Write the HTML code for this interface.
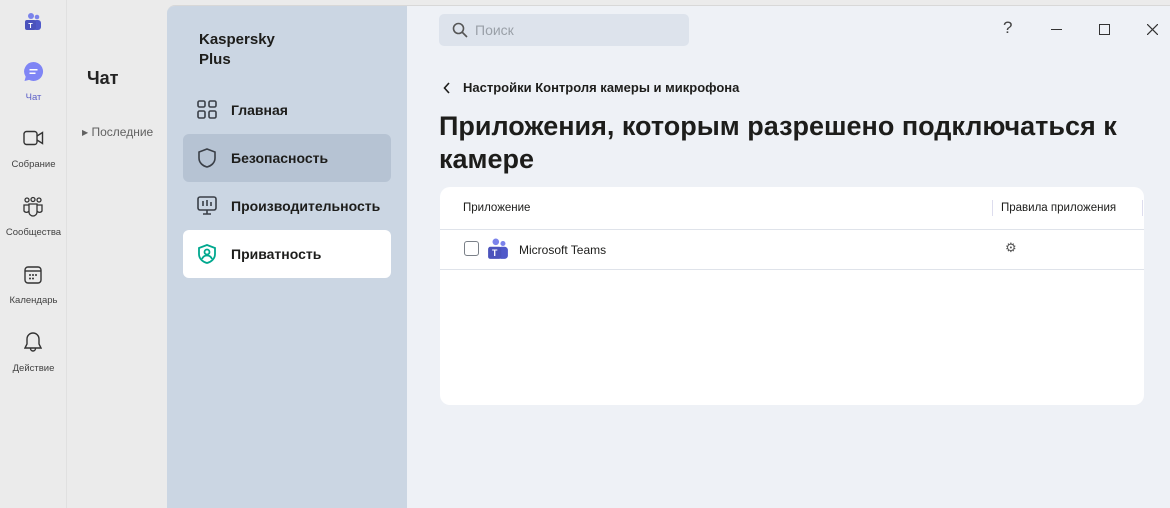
<!DOCTYPE html>
<html><head><meta charset="utf-8"><style>
*{box-sizing:border-box;margin:0;padding:0}
body{width:1170px;height:508px;overflow:hidden;background:#ebebeb;font-family:"Liberation Sans","DejaVu Sans",sans-serif;position:relative}
.abs{position:absolute}
.rail{left:0;top:0;width:67px;height:508px;background:#ebebeb;border-right:1px solid #e0e0e0}
.ri{position:absolute;left:0;width:67px;text-align:center;font-size:9.5px;color:#424242}
.chat{left:67px;top:0;width:110px;height:508px;background:#ebebeb}
.kw{left:167px;top:5px;width:1003px;height:503px;background:#eef1f6;border-top-left-radius:8px;overflow:hidden;border-top:1px solid #d8d8d8}
.side{left:0;top:0;width:240px;height:503px;background:#cbd6e3}
.nav{position:absolute;left:16px;width:208px;height:48px;border-radius:6px;font-size:14px;font-weight:bold;color:#1d1d1b;line-height:48px;padding-left:48px}
.nav svg{position:absolute;left:14px;top:14px}
</style></head><body>
<div class="abs rail">
  <svg class="abs" style="left:23px;top:12px" width="20" height="20" viewBox="0 0 20 20"><circle cx="8" cy="4" r="3" fill="#7b83eb"/><circle cx="14" cy="5" r="2.3" fill="#7b83eb"/><rect x="10" y="8" width="8" height="10" rx="3" fill="#5059c9"/><rect x="2" y="8" width="11" height="10" rx="2" fill="#4b53bc"/><text x="7.5" y="16" font-size="7" fill="#fff" text-anchor="middle" font-weight="bold" font-family="Liberation Sans">T</text></svg>
  <svg class="abs" style="left:23px;top:61px" width="21" height="21" viewBox="0 0 21 21"><path d="M10.5 1a9.5 9.5 0 1 1-4.4 17.9L1.5 20l1.2-4.3A9.5 9.5 0 0 1 10.5 1z" fill="#7f85f5"/><rect x="6.5" y="8" width="8" height="1.5" fill="#fff"/><rect x="6.5" y="11.5" width="6" height="1.5" fill="#fff"/></svg>
  <div class="ri" style="top:92px;color:#5b5fc7">Чат</div>
  <svg class="abs" style="left:23px;top:130px" width="21" height="16" viewBox="0 0 21 16" fill="none" stroke="#333" stroke-width="1.4"><rect x="1" y="1.5" width="13" height="13" rx="2.5"/><path d="M14 6l5.5-3.5v11L14 10"/></svg>
  <div class="ri" style="top:159px">Собрание</div>
  <svg class="abs" style="left:22px;top:196px" width="22" height="22" viewBox="0 0 22 22" fill="none" stroke="#333" stroke-width="1.3"><circle cx="5" cy="4" r="2"/><circle cx="11" cy="3.5" r="2"/><circle cx="17" cy="4" r="2"/><path d="M2 9h5v6a3 3 0 0 1-5 0zM15 9h5v6a3 3 0 0 1-5 0zM7 8h8v8a4 4 0 0 1-8 0z"/></svg>
  <div class="ri" style="top:227px">Сообщества</div>
  <svg class="abs" style="left:24px;top:266px" width="18" height="18" viewBox="0 0 18 18" fill="none" stroke="#333" stroke-width="1.4"><rect x="1" y="1" width="16" height="16" rx="3"/><path d="M1 5h16"/><g fill="#333" stroke="none"><circle cx="6" cy="9" r="1"/><circle cx="9" cy="9" r="1"/><circle cx="12" cy="9" r="1"/><circle cx="6" cy="12.5" r="1"/><circle cx="9" cy="12.5" r="1"/></g></svg>
  <div class="ri" style="top:295px">Календарь</div>
  <svg class="abs" style="left:24px;top:332px" width="18" height="21" viewBox="0 0 18 21" fill="none" stroke="#333" stroke-width="1.4"><path d="M9 1a6 6 0 0 1 6 6v5l2 4H1l2-4V7a6 6 0 0 1 6-6zM6.5 16.5a2.5 2.5 0 0 0 5 0"/></svg>
  <div class="ri" style="top:363px">Действие</div>
</div>
<div class="abs chat">
  <div class="abs" style="left:20px;top:68px;font-size:18px;font-weight:bold;color:#242424">Чат</div>
  <div class="abs" style="left:15px;top:125px;font-size:12px;color:#616161"><span style="font-size:8px;vertical-align:1px">▶</span> Последние</div>
</div>
<div class="abs kw">
  <div class="abs side">
    <div class="abs" style="left:32px;top:24px;font-size:15px;line-height:20px;color:#1d1d1b;font-weight:bold">Kaspersky<br>Plus</div>
    <div class="nav" style="top:80px"><svg width="20" height="20" viewBox="0 0 20 20" fill="none" stroke="#3a3f47" stroke-width="1.6"><rect x="1" y="1" width="7" height="6" rx="1.5"/><rect x="12" y="1" width="7" height="6" rx="1.5"/><rect x="1" y="11" width="7" height="7" rx="1.5"/><rect x="12" y="11" width="7" height="7" rx="1.5"/></svg>Главная</div>
    <div class="nav" style="top:128px;background:#b6c3d3"><svg width="20" height="20" viewBox="0 0 20 20" fill="none" stroke="#3a3f47" stroke-width="1.6"><path d="M10 1l8 3v6c0 5-4 8-8 9-4-1-8-4-8-9V4z"/></svg>Безопасность</div>
    <div class="nav" style="top:176px"><svg width="20" height="20" viewBox="0 0 20 20" fill="none" stroke="#3a3f47" stroke-width="1.6"><rect x="1" y="1" width="18" height="13" rx="2"/><path d="M6 5v5M10 4v6M14 6v4M10 14v4M6 18h8"/></svg>Производительность</div>
    <div class="nav" style="top:224px;background:#fff"><svg width="20" height="20" viewBox="0 0 20 20" fill="none" stroke="#00a88e" stroke-width="1.8"><path d="M10 1l8 3v6c0 5-4 8-8 9-4-1-8-4-8-9V4z"/><circle cx="10" cy="8" r="2.5"/><path d="M5 15c1-2.5 3-3.5 5-3.5s4 1 5 3.5"/></svg>Приватность</div>
  </div>
  <div class="abs" style="left:272px;top:8px;width:250px;height:32px;background:#dde3ec;border-radius:5px">
    <svg class="abs" style="left:13px;top:8px" width="16" height="16" viewBox="0 0 16 16" fill="none" stroke="#555" stroke-width="1.6"><circle cx="6.5" cy="6.5" r="5"/><path d="M10 10l5 5"/></svg>
    <div class="abs" style="left:36px;top:8px;font-size:14px;color:#9aa0a8">Поиск</div>
  </div>
  <div class="abs" style="left:836px;top:12px;font-size:17px;color:#444">?</div>
  <div class="abs" style="left:884px;top:23px;width:11px;height:1px;background:#333"></div>
  <div class="abs" style="left:932px;top:18px;width:11px;height:11px;border:1.3px solid #333"></div>
  <svg class="abs" style="left:980px;top:18px" width="11" height="11" viewBox="0 0 11 11" stroke="#333" stroke-width="1.2"><path d="M0 0l11 11M11 0L0 11"/></svg>
  <svg class="abs" style="left:276px;top:76px" width="8" height="12" viewBox="0 0 8 12" fill="none" stroke="#1d1d1b" stroke-width="1.6"><path d="M6 1L1.5 6 6 11"/></svg>
  <div class="abs" style="left:296px;top:74px;font-size:13px;font-weight:bold;color:#1d1d1b">Настройки Контроля камеры и микрофона</div>
  <div class="abs" style="left:272px;top:104px;font-size:27px;line-height:33px;font-weight:bold;color:#1d1d1b;width:720px">Приложения, которым разрешено подключаться к камере</div>
  <div class="abs" style="left:273px;top:181px;width:704px;height:218px;background:#fff;border-radius:10px">
    <div class="abs" style="left:23px;top:15px;font-size:11.5px;color:#1d1d1b">Приложение</div>
    <div class="abs" style="left:552px;top:13px;width:1px;height:16px;background:#dde"></div>
    <div class="abs" style="left:561px;top:15px;font-size:11.5px;color:#1d1d1b">Правила приложения</div>
    <div class="abs" style="left:702px;top:13px;width:1px;height:16px;background:#dde"></div>
    <div class="abs" style="left:0;top:42px;width:704px;height:1px;background:#dfe3ea"></div>
    <div class="abs" style="left:24px;top:54px;width:15px;height:15px;border:1.5px solid #7a8088;border-radius:3px"></div>
    <svg class="abs" style="left:46px;top:51px" width="24" height="22" viewBox="0 0 20 20"><circle cx="8" cy="3.5" r="3" fill="#7b83eb"/><circle cx="14.5" cy="5" r="2.3" fill="#7b83eb"/><rect x="10" y="8" width="9" height="11" rx="3" fill="#5059c9"/><rect x="1" y="8" width="12" height="11" rx="2" fill="#4b53bc"/><text x="7" y="16.5" font-size="8" fill="#fff" text-anchor="middle" font-weight="bold" font-family="Liberation Sans">T</text></svg>
    <div class="abs" style="left:79px;top:56px;font-size:12px;color:#1d1d1b">Microsoft Teams</div>
    <div class="abs" style="left:565px;top:53px;font-size:13px;color:#555">⚙</div>
    <div class="abs" style="left:0;top:82px;width:704px;height:1px;background:#dfe3ea"></div>
  </div>
</div>
</body></html>
